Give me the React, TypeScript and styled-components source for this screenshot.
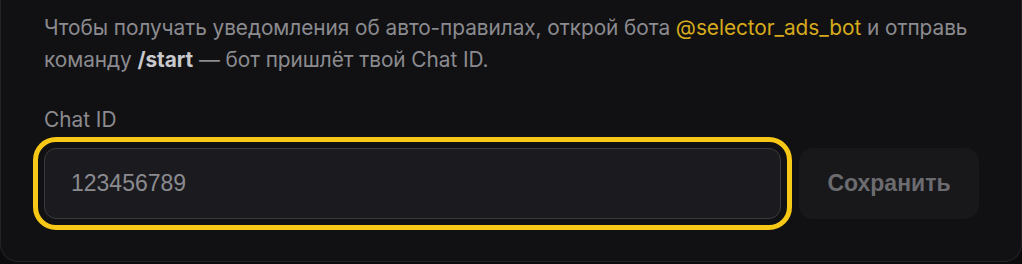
import React from 'react'
import styled, { createGlobalStyle } from 'styled-components'

const GlobalStyle = createGlobalStyle`
  body {
    margin: 0;
    background: #0b0b0d;
    font-family: Inter, "Noto Sans", sans-serif;
  }
`
const Card = styled.section`
  box-sizing: border-box;
  width: 1022px;
  background: #111113;
  border: 1px solid #232327;
  border-top: none;
  border-radius: 0 0 18px 18px;
  padding: 12px 40px 42px 43px;
`
const Hint = styled.p`
  margin: 0 0 32px;
  font-size: 20.8px;
  line-height: 32px;
  letter-spacing: -0.05px;
  color: #8b8b90;
  strong {
    color: #c9c9cd;
    font-weight: 700;
  }
`
const BotLink = styled.span`
  color: #d6ab1c;
`
const Label = styled.label`
  display: block;
  font-size: 20.8px;
  line-height: 24px;
  color: #8b8b90;
  margin-bottom: 16px;
`
const Row = styled.div`
  display: flex;
  align-items: center;
  gap: 18px;
  margin-right: 2px;
`
const Input = styled.input<{ $focused?: boolean }>`
  box-sizing: border-box;
  flex: 1;
  height: 71px;
  padding: 0 26px;
  background: #1b1b1f;
  border: 1px solid #3a3a3f;
  border-radius: 12px;
  color: #8a8a8f;
  font-family: "Liberation Sans", Arial, sans-serif;
  font-size: 23px;
  outline: 5px solid ${({ $focused }) => ($focused ? '#f7c916' : 'transparent')};
  outline-offset: 6px;
`
const SaveButton = styled.button`
  box-sizing: border-box;
  width: 180px;
  height: 71px;
  background: #18181b;
  border: none;
  border-radius: 14px;
  color: #6b6b70;
  font-family: "Liberation Sans", Arial, sans-serif;
  font-size: 23px;
  font-weight: 700;
  cursor: pointer;
`

const App: React.FC = () => {
  return (
    <>
      <GlobalStyle />
      <Card>
        <Hint>
          Чтобы получать уведомления об авто-правилах, открой бота <BotLink>@selector_ads_bot</BotLink> и отправь
          команду <strong>/start</strong> — бот пришлёт твой Chat ID.
        </Hint>
        <Label htmlFor='chat-id'>Chat ID</Label>
        <Row>
          <Input id='chat-id' $focused defaultValue='123456789' />
          <SaveButton>Сохранить</SaveButton>
        </Row>
      </Card>
    </>
  )
}

export default App
